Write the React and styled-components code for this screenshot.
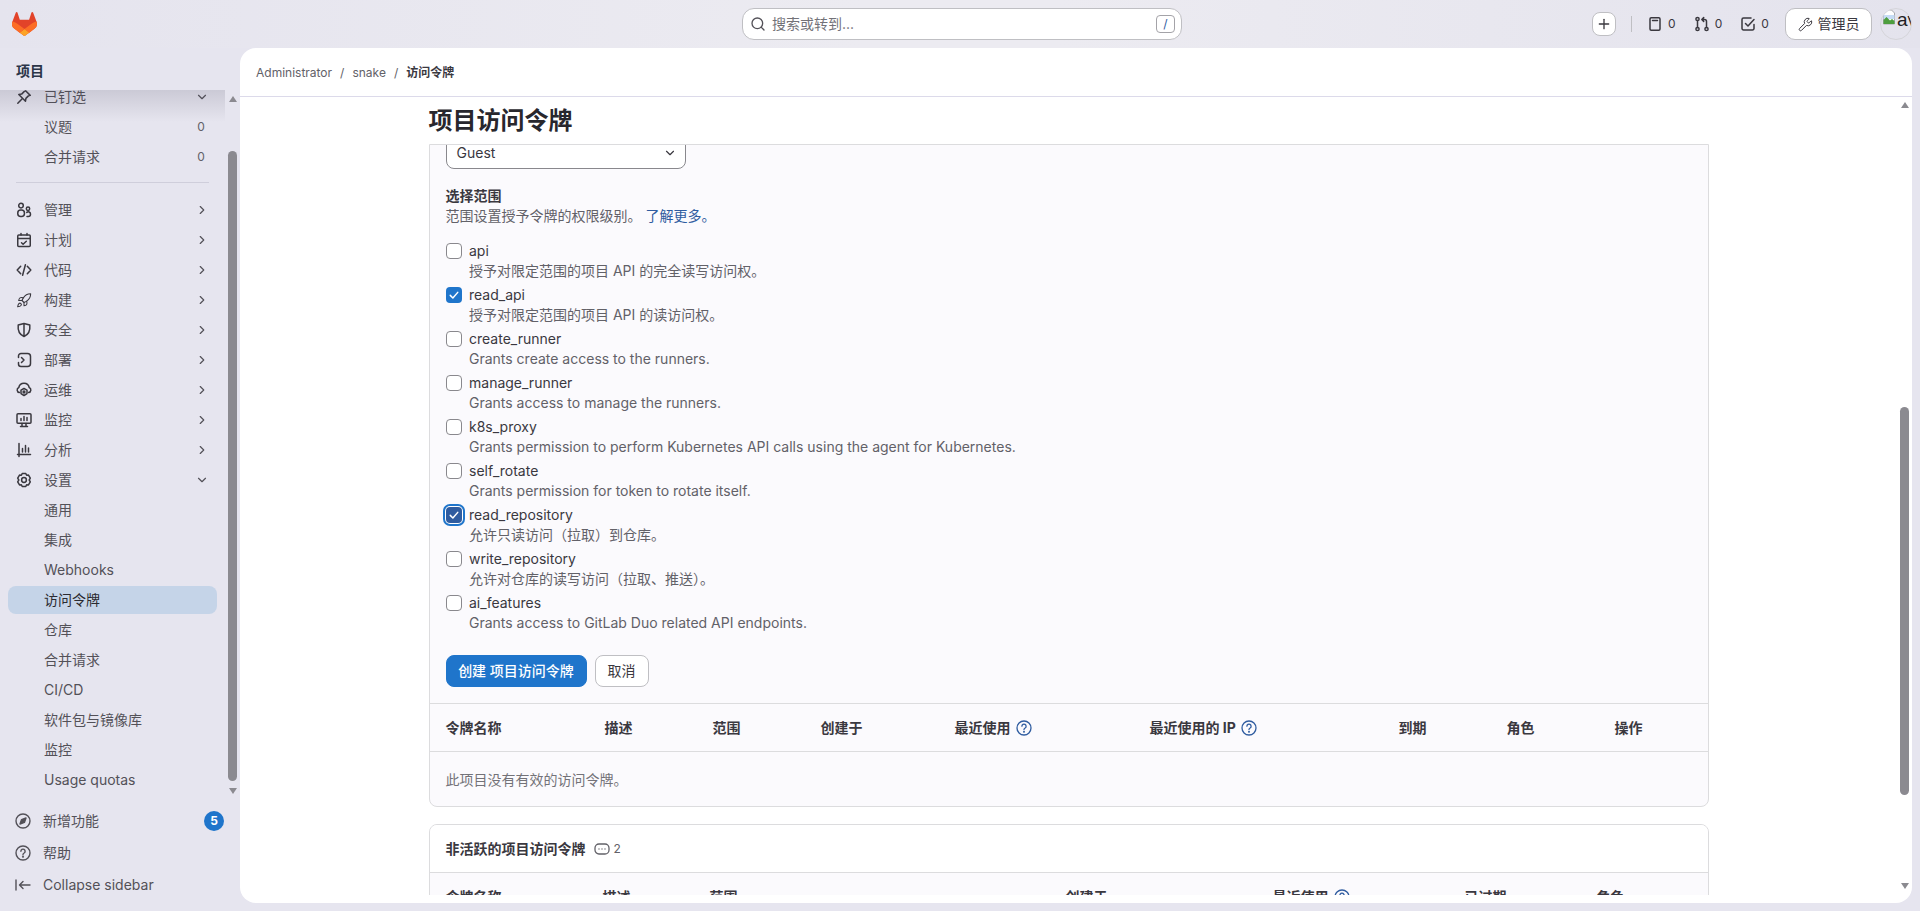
import React from 'react';
import styled, { createGlobalStyle } from 'styled-components';
import { Rocket, Search, Plus, Wrench, ChevronDown, ChevronRight } from 'lucide-react';

const GlobalStyle = createGlobalStyle`
  html, body {
    margin: 0;
    height: 100%;
    overflow: hidden;
    background: #e6e5ef;
  }
  body {
    font-family: Inter, "Noto Sans CJK SC", sans-serif;
    font-size: 14px;
    line-height: 20px;
    color: #3a383f;
  }
  * { box-sizing: border-box; }
`;

const Page = styled.div`
  height: 911px;
  display: flex;
  flex-direction: column;
  overflow: hidden;
`;

/* top bar */
const TopBar = styled.header`
  height: 48px;
  flex: none;
  display: flex;
  align-items: center;
  padding: 0 8px 0 12px;
  background: linear-gradient(90deg, #e5e4ee 0%, #ecebf1 45%, #ecebf1 55%, #e4e3ed 100%);
`;
const TopSide = styled.div`
  flex: 1;
  display: flex;
  align-items: center;
  justify-content: ${(p) => (p.$end ? 'flex-end' : 'flex-start')};
`;
const Logo = styled.svg`
  width: 25px;
  height: 24px;
  display: block;
`;
const SearchBox = styled.div`
  width: 440px;
  height: 32px;
  display: flex;
  align-items: center;
  gap: 6px;
  padding: 0 6px 0 7px;
  background: #fff;
  border: 1px solid #bfbfc3;
  border-radius: 12px;
  color: #737278;
`;
const SearchText = styled.span`
  flex: 1;
`;
const KeyHint = styled.kbd`
  width: 19px;
  height: 18px;
  display: flex;
  align-items: center;
  justify-content: center;
  border: 1px solid #a4a3a8;
  border-radius: 4px;
  font-family: Inter, sans-serif;
  font-size: 12px;
  color: #2f5ca0;
`;
const PlusButton = styled.button`
  width: 24px;
  height: 24px;
  padding: 0;
  display: flex;
  align-items: center;
  justify-content: center;
  background: #fff;
  border: 1px solid #bfbfc3;
  border-radius: 8px;
  color: #3a383f;
`;
const TopDivider = styled.span`
  width: 1px;
  height: 16px;
  margin: 0 9px 0 15px;
  background: #bfbfc3;
`;
const CountLink = styled.span`
  width: 46.7px;
  display: flex;
  align-items: center;
  gap: 5px;
  padding-left: 6px;
  font-size: 12px;
  color: #3a383f;
`;
const AdminButton = styled.button`
  width: 87px;
  height: 32px;
  margin-left: 4px;
  padding: 0;
  display: flex;
  align-items: center;
  justify-content: center;
  gap: 5px;
  background: #fff;
  border: 1px solid #bfbfc3;
  border-radius: 10px;
  font: inherit;
  color: #3a383f;
`;
const Avatar = styled.div`
  width: 32px;
  height: 32px;
  margin-left: 8px;
  display: flex;
  border: 1px solid #d5d5da;
  border-radius: 50%;
  overflow: hidden;
  font-family: "Liberation Sans", sans-serif;
  font-size: 19px;
  line-height: 22px;
  color: #1f1e24;
  white-space: nowrap;
`;

/* body */
const Body = styled.div`
  flex: 1;
  min-height: 0;
  display: flex;
  padding-right: 8px;
`;
const Sidebar = styled.aside`
  width: 240px;
  flex: none;
  display: flex;
  flex-direction: column;
  padding-bottom: 10px;
`;
const SideHeading = styled.div`
  height: 42px;
  flex: none;
  padding: 13px 16px 0;
  font-weight: 700;
  color: #2b3548;
`;
const SideScroll = styled.div`
  height: 715px;
  flex: none;
  display: flex;
`;
const SideList = styled.nav`
  position: relative;
  width: 225px;
  flex: none;
  padding: 0 8px;
  overflow: hidden;
  &::before {
    content: '';
    position: absolute;
    top: 0;
    left: 0;
    right: 0;
    height: 32px;
    background: linear-gradient(180deg, rgba(70, 68, 90, 0.17), rgba(70, 68, 90, 0));
  }
`;
const NavGroup = styled.div`
  display: flex;
  flex-direction: column;
  gap: 2px;
  margin-top: ${(p) => p.$top || 0}px;
`;
const NavItem = styled.div`
  height: 28px;
  flex: none;
  display: flex;
  align-items: center;
  gap: 12px;
  padding: 0 8px;
  border-radius: 8px;
  background: ${(p) => (p.$active ? '#c5d4e8' : 'transparent')};
  color: ${(p) => (p.$active ? '#2b2a30' : '#535158')};
`;
const NavIconSlot = styled.span`
  width: 16px;
  height: 16px;
  flex: none;
  display: flex;
  align-items: center;
  justify-content: center;
  color: #3a383f;
`;
const NavLabel = styled.span`
  flex: 1;
  white-space: nowrap;
  padding-left: ${(p) => (p.$nested ? 28 : 0)}px;
`;
const NavCount = styled.span`
  width: 16px;
  text-align: center;
  font-size: 12px;
  color: #626168;
`;
const NavRule = styled.hr`
  margin: 11px 8px 13px;
  border: 0;
  border-top: 1px solid #cfcedb;
`;
const ScrollTrack = styled.div`
  width: 9px;
  flex: none;
  margin-left: ${(p) => p.$left || 0}px;
  display: flex;
  flex-direction: column;
  align-items: center;
`;
const ScrollUp = styled.span`
  width: 0;
  height: 0;
  margin-top: ${(p) => p.$gap}px;
  border-left: 4.5px solid transparent;
  border-right: 4.5px solid transparent;
  border-bottom: 6.5px solid #8b8a90;
`;
const ScrollDown = styled(ScrollUp)`
  margin-top: ${(p) => p.$gap}px;
  border-bottom: 0;
  border-top: 6.5px solid #8b8a90;
`;
const ScrollThumb = styled.span`
  width: 9px;
  flex: none;
  height: ${(p) => p.$height}px;
  margin-top: ${(p) => p.$gap}px;
  border-radius: 5px;
  background: #8b8a90;
`;
const SideFooter = styled.div`
  flex: none;
  display: flex;
  flex-direction: column;
`;
const FooterItem = styled.div`
  height: 32px;
  display: flex;
  align-items: center;
  gap: 12px;
  padding: 0 16px 0 15px;
  color: #535158;
`;
const FooterLabel = styled.span`
  flex: 1;
`;
const Badge = styled.span`
  width: 20px;
  height: 20px;
  display: flex;
  align-items: center;
  justify-content: center;
  border-radius: 50%;
  background: #1f75cb;
  color: #fff;
  font-size: 12px;
  font-weight: 700;
`;

/* main panel */
const Panel = styled.main`
  flex: 1;
  min-width: 0;
  height: 855px;
  display: flex;
  flex-direction: column;
  background: #fff;
  border-radius: 16px;
  overflow: hidden;
`;
const Crumbs = styled.div`
  height: 49px;
  flex: none;
  display: flex;
  align-items: center;
  gap: 8px;
  padding: 1px 16px 0;
  border-bottom: 1px solid #dcdaea;
  font-size: 12px;
  color: #626168;
`;
const CrumbCurrent = styled.span`
  font-weight: 700;
  color: #3a383f;
`;
const PanelRow = styled.div`
  height: 798px;
  flex: none;
  display: flex;
`;
const Content = styled.div`
  width: 1657px;
  flex: none;
  overflow: hidden;
`;
const Column = styled.div`
  width: 1280px;
  margin: 0 auto;
`;
const PageTitle = styled.h1`
  height: 47px;
  margin: 0;
  padding-left: 0;
  display: flex;
  align-items: center;
  font-size: 24px;
  font-weight: 700;
  line-height: 32px;
  color: #28272d;
`;
const Card = styled.section`
  border: 1px solid #dcdcde;
  border-radius: ${(p) => (p.$open ? '0 0 8px 8px' : '8px')};
  margin-top: ${(p) => p.$top || 0}px;
  background: #fbfafd;
  overflow: hidden;
`;
const FormArea = styled.div`
  padding: 0 16px 16px;
  border-bottom: 1px solid #dcdcde;
`;
const SelectBox = styled.div`
  width: 240px;
  height: 32px;
  margin-top: -8px;
  display: flex;
  align-items: center;
  justify-content: space-between;
  padding: 0 8px 0 10px;
  background: #fff;
  border: 1px solid #89888d;
  border-radius: 8px;
  color: #3a383f;
`;
const FieldLabel = styled.div`
  margin-top: 17px;
  font-weight: 700;
  color: #3a383f;
`;
const FieldHint = styled.div`
  margin-bottom: 15px;
  color: #626168;
`;
const Link = styled.a`
  color: #2f5ca0;
  margin-left: 4px;
`;
const ScopeList = styled.div`
  display: flex;
  flex-direction: column;
  gap: 4px;
`;
const ScopeRow = styled.label`
  display: flex;
  gap: 7.5px;
`;
const CheckBox = styled.span`
  width: 16px;
  height: 16px;
  flex: none;
  margin-top: 2px;
  display: flex;
  align-items: center;
  justify-content: center;
  border: 1px solid ${(p) => (p.$checked ? 'transparent' : '#89888d')};
  border-radius: 4px;
  background: ${(p) => (p.$focused ? '#2f5ca0' : p.$checked ? '#1f75cb' : '#fff')};
  box-shadow: ${(p) => (p.$focused ? '0 0 0 1px #fff, 0 0 0 3px #1f75cb' : 'none')};
`;
const ScopeName = styled.div`
  color: #3a383f;
`;
const ScopeHelp = styled.div`
  color: #626168;
`;
const Actions = styled.div`
  margin-top: 22px;
  display: flex;
  gap: 8px;
`;
const Button = styled.button`
  height: 32px;
  padding: 0;
  width: ${(p) => (p.$primary ? 141 : 54)}px;
  border: 1px solid ${(p) => (p.$primary ? '#1f75cb' : '#bfbfc3')};
  border-radius: 8px;
  background: ${(p) => (p.$primary ? '#1f75cb' : '#fff')};
  color: ${(p) => (p.$primary ? '#fff' : '#3a383f')};
  font: inherit;
  font-weight: ${(p) => (p.$primary ? 500 : 400)};
`;
const TableHead = styled.div`
  height: 48px;
  display: grid;
  grid-template-columns: ${(p) => p.$cols};
  align-items: center;
  border-bottom: 1px solid #dcdcde;
  font-weight: 700;
  color: #3a383f;
`;
const HeadCell = styled.div`
  display: flex;
  align-items: center;
  gap: 5px;
  padding-left: 16px;
  white-space: nowrap;
`;
const EmptyRow = styled.div`
  height: 54px;
  display: flex;
  align-items: center;
  padding: 1px 16px 0;
  color: #737278;
`;
const CardHeader = styled.div`
  height: 48px;
  display: flex;
  align-items: center;
  gap: 8px;
  padding: 0 16px;
  background: #fff;
  border-bottom: 1px solid #dcdcde;
  font-weight: 700;
  color: #3a383f;
`;
const CardCount = styled.span`
  display: flex;
  align-items: center;
  gap: 4px;
  font-size: 12px;
  font-weight: 400;
  color: #626168;
`;

const Icon = ({ size = 16, color = 'currentColor', sw = 1.5, children }) => (
  <svg
    width={size}
    height={size}
    viewBox="0 0 16 16"
    fill="none"
    stroke={color}
    strokeWidth={sw}
    strokeLinecap="round"
    strokeLinejoin="round"
  >
    {children}
  </svg>
);

const GitlabLogo = () => (
  <Logo viewBox="0 0 25 24">
    <path
      d="m24.507 9.5-.034-.09L21.082.562a.896.896 0 0 0-1.694.091l-2.29 7.01H7.825L5.535.653a.898.898 0 0 0-1.694-.09L.451 9.411.416 9.5a6.297 6.297 0 0 0 2.09 7.278l.012.01.03.022 5.16 3.867 2.56 1.935 1.554 1.176a1.051 1.051 0 0 0 1.268 0l1.555-1.176 2.56-1.935 5.197-3.89.014-.01A6.297 6.297 0 0 0 24.507 9.5Z"
      fill="#E24329"
    />
    <path
      d="m24.507 9.5-.034-.09a11.44 11.44 0 0 0-4.56 2.051l-7.447 5.632 4.742 3.584 5.197-3.89.014-.01A6.297 6.297 0 0 0 24.507 9.5Z"
      fill="#FC6D26"
    />
    <path
      d="m7.707 20.677 2.56 1.935 1.555 1.176a1.051 1.051 0 0 0 1.268 0l1.555-1.176 2.56-1.935-4.743-3.584-4.755 3.584Z"
      fill="#FCA326"
    />
    <path
      d="M5.01 11.461a11.43 11.43 0 0 0-4.56-2.05L.416 9.5a6.297 6.297 0 0 0 2.09 7.278l.012.01.03.022 5.16 3.867 4.745-3.584-7.444-5.632Z"
      fill="#FC6D26"
    />
  </Logo>
);

const icons = {
  pin: (
    <Icon>
      <path d="M9.6 1.8l4.6 4.6-1.8.5-2.5 2.5-.4 2.8-6.7-6.7 2.8-.4 2.5-2.5z" />
      <path d="M6.2 9.8 1.8 14.2" />
    </Icon>
  ),
  users: (
    <Icon>
      <circle cx="5" cy="3.6" r="2.3" />
      <rect x="1.75" y="8" width="6.7" height="6.5" rx="3" />
      <circle cx="12" cy="6.8" r="1.7" />
      <path d="M11 14.5h1.2a2.3 2.3 0 0 0 2.3-2.3v-.2a2.2 2.2 0 0 0-3.7-1.6" />
    </Icon>
  ),
  plan: (
    <Icon>
      <rect x="1.75" y="3" width="12.5" height="11.5" rx="1" />
      <path d="M1.75 6.5h12.5M5 1.5V3M11 1.5V3M5.5 10.7l1.6 1.5 3.2-3" />
    </Icon>
  ),
  code: (
    <Icon>
      <path d="M4.7 4.2 1.2 8l3.5 3.8M11.3 4.2 14.8 8l-3.5 3.8M9.4 2.8 6.6 13.2" />
    </Icon>
  ),
  rocket: <Rocket size={17} strokeWidth={1.6} />,
  shield: (
    <Icon>
      <path d="M8 1.5 13.8 3c.6 5.5-1 9.4-5.8 11.5C3.2 12.4 1.6 8.5 2.2 3L8 1.5zM8 1.5v13" />
    </Icon>
  ),
  deploy: (
    <Icon>
      <path d="M2.5 5.5V4A2.5 2.5 0 0 1 5 1.5h6.5A3 3 0 0 1 14.5 4.5v7a3 3 0 0 1-3 3H5A2.5 2.5 0 0 1 2.5 12v-1.5" />
      <path d="M5.5 5.5 8 8l-2.5 2.5" />
    </Icon>
  ),
  ops: (
    <Icon>
      <path d="M3.5 10.5A2.6 2.6 0 0 1 2.8 5.5 5.3 5.3 0 0 1 13.2 5.5a2.6 2.6 0 0 1-.7 5" />
      <path d="M8 6.5l3 1.7v3.4L8 13.5l-3-1.9V8.2z" />
      <circle cx="8" cy="10" r=".9" />
    </Icon>
  ),
  monitor: (
    <Icon>
      <rect x="1" y="1.75" width="14" height="9.5" rx="1" />
      <path d="M5 8.5V6.5M8 8.5V4.5M11 8.5V5.5M6 11.5v3M10 11.5v3M4.5 14.5h7" />
    </Icon>
  ),
  chart: (
    <Icon>
      <path d="M3 1.5v13M1.5 12.5h13M6.5 10V6.5M9.5 10V3.5M12.5 10V6" />
    </Icon>
  ),
  gear: (
    <Icon>
      <path d="M6.2 1.5h3.6l.8 1.7 1.9-.1 1.8 3.1-1.1 1.8 1.1 1.8-1.8 3.1-1.9-.1-.8 1.7H6.2l-.8-1.7-1.9.1-1.8-3.1L2.8 8 1.7 6.2l1.8-3.1 1.9.1z" />
      <circle cx="8" cy="8" r="2.4" />
    </Icon>
  ),
};

const navTop = [
  { label: '议题', count: 0 },
  { label: '合并请求', count: 0 },
];
const navMain = [
  { label: '管理', icon: 'users' },
  { label: '计划', icon: 'plan' },
  { label: '代码', icon: 'code' },
  { label: '构建', icon: 'rocket' },
  { label: '安全', icon: 'shield' },
  { label: '部署', icon: 'deploy' },
  { label: '运维', icon: 'ops' },
  { label: '监控', icon: 'monitor' },
  { label: '分析', icon: 'chart' },
];
const navSettings = ['通用', '集成', 'Webhooks', '访问令牌', '仓库', '合并请求', 'CI/CD', '软件包与镜像库', '监控', 'Usage quotas'];

const scopes = [
  { name: 'api', help: '授予对限定范围的项目 API 的完全读写访问权。' },
  { name: 'read_api', help: '授予对限定范围的项目 API 的读访问权。', checked: true },
  { name: 'create_runner', help: 'Grants create access to the runners.' },
  { name: 'manage_runner', help: 'Grants access to manage the runners.' },
  { name: 'k8s_proxy', help: 'Grants permission to perform Kubernetes API calls using the agent for Kubernetes.' },
  { name: 'self_rotate', help: 'Grants permission for token to rotate itself.' },
  { name: 'read_repository', help: '允许只读访问（拉取）到仓库。', checked: true, focused: true },
  { name: 'write_repository', help: '允许对仓库的读写访问（拉取、推送）。' },
  { name: 'ai_features', help: 'Grants access to GitLab Duo related API endpoints.' },
];

const QuestionIcon = () => (
  <Icon color="#2f5ca0" sw={1.3}>
    <circle cx="8" cy="8" r="7" />
    <path d="M5.9 6.2a2.1 2.1 0 1 1 3.2 1.8c-.7.4-1.1.8-1.1 1.6" />
    <circle cx="8" cy="11.7" r=".4" />
  </Icon>
);

const activeHead = ['令牌名称', '描述', '范围', '创建于', '最近使用', '最近使用的 IP', '到期', '角色', '操作'];
const inactiveHead = ['令牌名称', '描述', '范围', '创建于', '最近使用', '已过期', '角色'];

const App = () => (
  <Page>
    <GlobalStyle />
    <TopBar>
      <TopSide>
        <GitlabLogo />
      </TopSide>
      <SearchBox>
        <Search size={16} strokeWidth={2} color="#535158" />
        <SearchText>搜索或转到...</SearchText>
        <KeyHint>/</KeyHint>
      </SearchBox>
      <TopSide $end>
        <PlusButton>
          <Plus size={16} strokeWidth={2} />
        </PlusButton>
        <TopDivider />
        <CountLink>
          <Icon>
            <rect x="3" y="1.75" width="10" height="12.5" rx="1.2" />
            <path d="M5.5 4.5h5" />
          </Icon>
          0
        </CountLink>
        <CountLink>
          <Icon>
            <circle cx="3.5" cy="3" r="1.6" />
            <circle cx="3.5" cy="13" r="1.6" />
            <circle cx="12.5" cy="13" r="1.6" />
            <path d="M3.5 4.6v6.8M12.5 11.4V5.5a2 2 0 0 0-2-2H8M9.7 1.6 7.8 3.5l1.9 1.9" />
          </Icon>
          0
        </CountLink>
        <CountLink>
          <Icon>
            <path d="M14 8.5v4A1.5 1.5 0 0 1 12.500 14h-9A1.500 1.500 0 0 1 2 12.500v-9A1.500 1.500 0 0 1 3.500 2H11" />
            <path d="M5.500 7.500 8 10l6-6.500" />
          </Icon>
          0
        </CountLink>
        <AdminButton>
          <Wrench size={15} strokeWidth={1.6} />
          管理员
        </AdminButton>
        <Avatar>
          <svg width="16" height="16" viewBox="0 0 16 16" style={{ flex: 'none' }}>
            <path d="M2.500 1h8l3 3v11h-11z" fill="#fff" stroke="#a8a8ad" />
            <path d="M2.500 6h11v4h-11z" fill="#c6dcf5" />
            <path d="M2.500 15v-4l3-3 3.500 3.500 2-1.500 2.500 2v3z" fill="#4d9e3e" />
          </svg>
          av
        </Avatar>
      </TopSide>
    </TopBar>

    <Body>
      <Sidebar>
        <SideHeading>项目</SideHeading>
        <SideScroll>
          <SideList>
            <NavGroup $top={-7}>
              <NavItem>
                <NavIconSlot>{icons.pin}</NavIconSlot>
                <NavLabel>已钉选</NavLabel>
                <ChevronDown size={14} strokeWidth={2} />
              </NavItem>
              {navTop.map((item) => (
                <NavItem key={item.label}>
                  <NavLabel $nested>{item.label}</NavLabel>
                  <NavCount>{item.count}</NavCount>
                </NavItem>
              ))}
            </NavGroup>
            <NavRule />
            <NavGroup>
              {navMain.map((item) => (
                <NavItem key={item.label}>
                  <NavIconSlot>{icons[item.icon]}</NavIconSlot>
                  <NavLabel>{item.label}</NavLabel>
                  <ChevronRight size={14} strokeWidth={2} />
                </NavItem>
              ))}
              <NavItem>
                <NavIconSlot>{icons.gear}</NavIconSlot>
                <NavLabel>设置</NavLabel>
                <ChevronDown size={14} strokeWidth={2} />
              </NavItem>
              {navSettings.map((label) => (
                <NavItem key={label} $active={label === '访问令牌'}>
                  <NavLabel $nested>{label}</NavLabel>
                </NavItem>
              ))}
            </NavGroup>
          </SideList>
          <ScrollTrack $left={3}>
            <ScrollUp $gap={6} />
            <ScrollThumb $gap={49} $height={630} />
            <ScrollDown $gap={7} />
          </ScrollTrack>
        </SideScroll>
        <SideFooter>
          <FooterItem>
            <Icon sw={1.4}>
              <circle cx="8" cy="8" r="7" />
              <path d="M11 5 9.400 9.400 5 11l1.600-4.400z" fill="currentColor" />
            </Icon>
            <FooterLabel>新增功能</FooterLabel>
            <Badge>5</Badge>
          </FooterItem>
          <FooterItem>
            <Icon sw={1.4}>
              <circle cx="8" cy="8" r="7" />
              <path d="M5.900 6.200a2.100 2.100 0 1 1 3.200 1.800c-.7.4-1.100.8-1.100 1.600" />
              <circle cx="8" cy="11.700" r=".4" />
            </Icon>
            <FooterLabel>帮助</FooterLabel>
          </FooterItem>
          <FooterItem>
            <Icon sw={1.4}>
              <path d="M1 3v10M15 8H4.500M8 4.500 4.500 8 8 11.500" />
            </Icon>
            <FooterLabel>Collapse sidebar</FooterLabel>
          </FooterItem>
        </SideFooter>
      </Sidebar>

      <Panel>
        <Crumbs>
          <span>Administrator</span>
          <span>/</span>
          <span>snake</span>
          <span>/</span>
          <CrumbCurrent>访问令牌</CrumbCurrent>
        </Crumbs>
        <PanelRow>
          <Content>
            <Column>
              <PageTitle>项目访问令牌</PageTitle>
              <Card $open>
                <FormArea>
                  <SelectBox>
                    Guest
                    <ChevronDown size={14} strokeWidth={2} />
                  </SelectBox>
                  <FieldLabel>选择范围</FieldLabel>
                  <FieldHint>
                    范围设置授予令牌的权限级别。
                    <Link>了解更多。</Link>
                  </FieldHint>
                  <ScopeList>
                    {scopes.map((s) => (
                      <ScopeRow key={s.name}>
                        <CheckBox $checked={s.checked} $focused={s.focused}>
                          {s.checked && (
                            <Icon size={12} color="#fff" sw={2}>
                              <path d="M3 8.500 6.500 12 13 4.500" />
                            </Icon>
                          )}
                        </CheckBox>
                        <div>
                          <ScopeName>{s.name}</ScopeName>
                          <ScopeHelp>{s.help}</ScopeHelp>
                        </div>
                      </ScopeRow>
                    ))}
                  </ScopeList>
                  <Actions>
                    <Button $primary>创建 项目访问令牌</Button>
                    <Button>取消</Button>
                  </Actions>
                </FormArea>
                <TableHead $cols="159px 108px 108px 134px 195px 249px 108px 108px 1fr">
                  {activeHead.map((h) => (
                    <HeadCell key={h}>
                      {h}
                      {h.startsWith('最近使用') && <QuestionIcon />}
                    </HeadCell>
                  ))}
                </TableHead>
                <EmptyRow>此项目没有有效的访问令牌。</EmptyRow>
              </Card>
              <Card $top={17}>
                <CardHeader>
                  非活跃的项目访问令牌
                  <CardCount>
                    <Icon sw={1.3}>
                      <rect x="1" y="3" width="14" height="10" rx="4" />
                      <path d="M5 8h.01M8 8h.01M11 8h.01" />
                    </Icon>
                    2
                  </CardCount>
                </CardHeader>
                <TableHead $cols="157px 107px 356px 207px 192px 132px 1fr">
                  {inactiveHead.map((h) => (
                    <HeadCell key={h}>
                      {h}
                      {h === '最近使用' && <QuestionIcon />}
                    </HeadCell>
                  ))}
                </TableHead>
              </Card>
            </Column>
          </Content>
          <ScrollTrack $left={3}>
            <ScrollUp $gap={5} />
            <ScrollThumb $gap={299} $height={388} />
            <ScrollDown $gap={88} />
          </ScrollTrack>
        </PanelRow>
      </Panel>
    </Body>
  </Page>
);

export default App;
